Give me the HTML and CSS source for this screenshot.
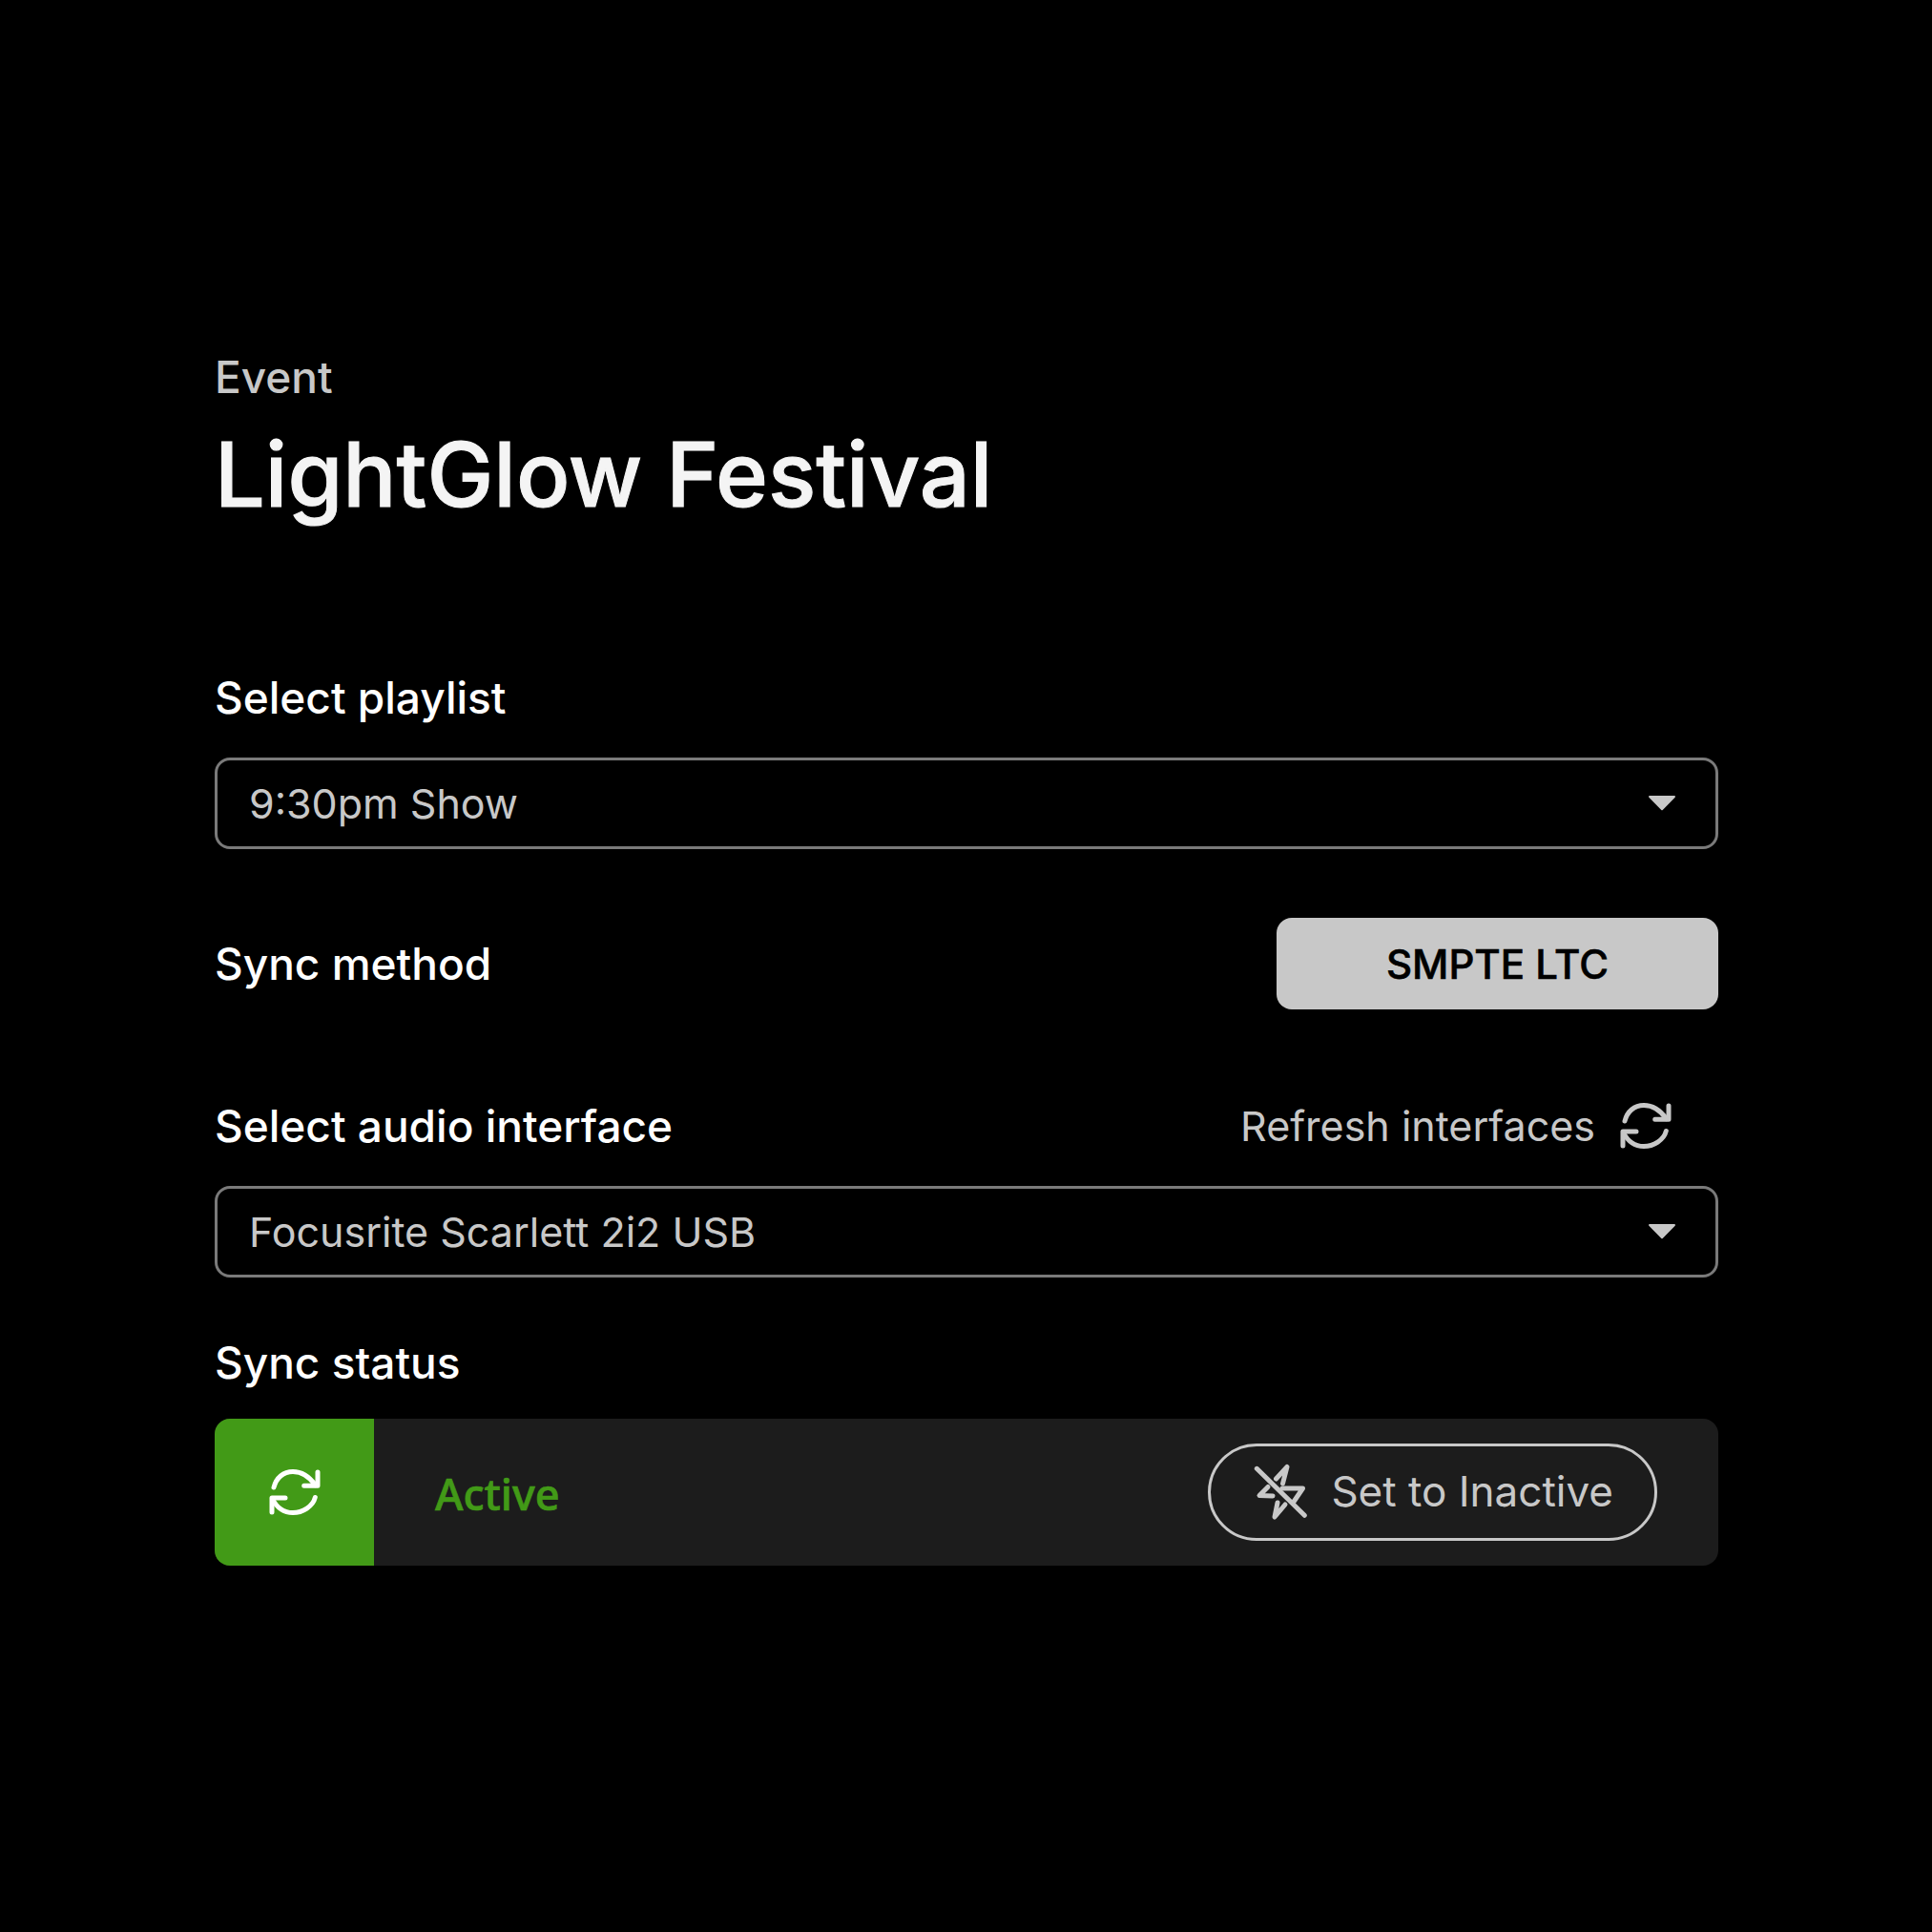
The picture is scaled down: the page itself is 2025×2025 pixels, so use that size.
FILE: index.html
```html
<!DOCTYPE html>
<html lang="en">
<head>
    <meta charset="UTF-8">
    <title>LightGlow Festival</title>
    <link rel="stylesheet" href="styles.css">
</head>
<body>
    <div class="event-head">
        <div class="eyebrow">Event</div>
        <h1>LightGlow Festival</h1>
    </div>

    <div class="field-label playlist-label">Select playlist</div>
    <div class="dropdown">
        <span>9:30pm Show</span>
        <svg class="caret" viewBox="0 0 30 18"><path d="M2 1h26a1 1 0 0 1 .7 1.7L15.7 16a1 1 0 0 1-1.4 0L1.300 2.700A1 1 0 0 1 2 1z"/></svg>
    </div>

    <div class="sync-row">
        <div class="field-label">Sync method</div>
        <button class="method-btn">SMPTE LTC</button>
    </div>

    <div class="audio-row">
        <div class="field-label">Select audio interface</div>
        <div class="refresh">
            <span>Refresh interfaces</span>
            <svg class="sync-icon" viewBox="0 0 54 48">
                <path d="M5 19C7.500 9 15 2.500 25 2.500 34 2.500 42 7.500 48.500 16.500"/>
                <path d="M51 3V17.300H36.700"/>
                <path d="M48.300 29.500C46 39 35 45.500 25 45.500 15 45.500 8 40 3.500 31"/>
                <path d="M3 45V30H17"/>
            </svg>
        </div>
    </div>
    <div class="dropdown">
        <span>Focusrite Scarlett 2i2 USB</span>
        <svg class="caret" viewBox="0 0 30 18"><path d="M2 1h26a1 1 0 0 1 .7 1.7L15.7 16a1 1 0 0 1-1.4 0L1.300 2.700A1 1 0 0 1 2 1z"/></svg>
    </div>

    <div class="field-label status-label">Sync status</div>
    <div class="status-bar">
        <div class="status-icon">
            <svg class="sync-icon" viewBox="0 0 54 48">
                <path d="M5 19C7.500 9 15 2.500 25 2.500 34 2.500 42 7.500 48.500 16.500"/>
                <path d="M51 3V17.300H36.700"/>
                <path d="M48.300 29.500C46 39 35 45.500 25 45.500 15 45.500 8 40 3.500 31"/>
                <path d="M3 45V30H17"/>
            </svg>
        </div>
        <div class="status-text">Active</div>
        <button class="inactive-btn">
            <svg class="zap-off" viewBox="15 14 56 60">
                <path d="M18.300 19.300L68.300 68.300"/>
                <path d="M38.500 30L50 17.500 45.500 35"/>
                <path d="M30 38.500L21 47.500 35 48"/>
                <path d="M45 40H66.500L57 54"/>
                <path d="M48 57L37 70 40 55"/>
            </svg>
            <span class="inactive-text">Set to Inactive</span>
        </button>
    </div>
</body>
</html>
```

FILE: styles.css
```css
body {
    margin: 0;
    height: 2025px;
    box-sizing: border-box;
    padding: 367px 224px 0 225px;
    background-color: #000;
    color: #fff;
    font-family: Inter, "Noto Sans", sans-serif;
}
.event-head {
    margin-bottom: 150px;
}
.eyebrow {
    font-size: 46px;
    line-height: 56px;
    color: #c8c8c8;
    font-weight: 500;
}
h1 {
    margin: 18px 0 0;
    font-size: 93.500px;
    line-height: 112px;
    font-weight: 500;
    -webkit-text-stroke: 1px #f4f4f4;
    color: #f4f4f4;
}
.field-label {
    font-size: 46px;
    line-height: 56px;
    font-weight: 500;
    color: #fff;
}
.playlist-label {
    margin-bottom: 35px;
}
.dropdown {
    height: 96px;
    box-sizing: border-box;
    border: 3px solid #7a7a7a;
    border-radius: 16px;
    padding: 0 41px 0 33px;
    display: flex;
    align-items: center;
    justify-content: space-between;
    font-size: 43px;
    color: #c8c8c8;
}
.caret {
    width: 30px;
    height: 18px;
    fill: #c8c8c8;
}
.sync-row {
    margin-top: 72px;
    height: 96px;
    display: flex;
    align-items: center;
    justify-content: space-between;
}
.method-btn {
    width: 463px;
    height: 96px;
    border: none;
    border-radius: 16px;
    background-color: #c8c8c8;
    color: #000;
    font-family: inherit;
    font-size: 42px;
    font-weight: 500;
    -webkit-text-stroke: 0.6px #000;
}
.audio-row {
    margin-top: 84px;
    height: 76px;
    margin-bottom: 25px;
    display: flex;
    align-items: center;
    justify-content: space-between;
}
.refresh {
    display: flex;
    align-items: center;
    gap: 26px;
    padding-right: 49px;
    font-size: 43px;
    color: #c8c8c8;
}
.sync-icon {
    width: 54px;
    height: 48px;
    fill: none;
    stroke: currentColor;
    stroke-width: 5;
    stroke-linecap: round;
    stroke-linejoin: round;
}
.status-label {
    margin-top: 61px;
    margin-bottom: 31px;
}
.status-bar {
    height: 154px;
    display: flex;
    align-items: center;
    border-radius: 16px;
    background-color: #1c1c1c;
    overflow: hidden;
    padding-right: 64px;
}
.status-icon {
    width: 167px;
    height: 100%;
    flex: none;
    display: flex;
    align-items: center;
    justify-content: center;
    background-color: #429a17;
    color: #fff;
}
.status-text {
    margin-left: 64px;
    margin-top: 3px;
    font-family: "Noto Sans", sans-serif;
    font-size: 45px;
    font-weight: 500;
    -webkit-text-stroke: 0.7px #429a17;
    color: #429a17;
}
.inactive-btn {
    margin-left: auto;
    height: 102px;
    box-sizing: border-box;
    border: 3px solid #c8c8c8;
    border-radius: 51px;
    padding: 0 43px 0 45px;
    display: flex;
    align-items: center;
    gap: 25px;
    background: none;
    color: #c8c8c8;
    font-family: inherit;
    font-size: 44px;
}
.inactive-text {
    margin-bottom: 2px;
}
.zap-off {
    width: 56px;
    height: 60px;
    fill: none;
    stroke: currentColor;
    stroke-width: 5;
    stroke-linecap: round;
    stroke-linejoin: round;
}
```
